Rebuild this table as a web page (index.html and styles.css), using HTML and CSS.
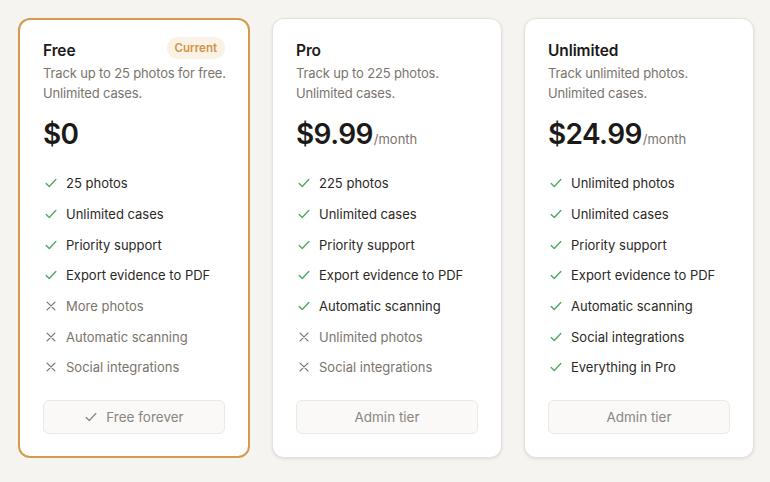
FILE: index.html
```html
<!DOCTYPE html>
<html>
<head>
<meta charset="utf-8">
<link rel="stylesheet" href="styles.css">
</head>
<body>
<div class="plans">
  <div class="card current">
    <div class="head">
      <h2 class="name">Free</h2>
      <span class="badge">Current</span>
    </div>
    <p class="desc"><span>Track up to 25 photos for free.</span> <span>Unlimited cases.</span></p>
    <div class="price"><span class="amount">$0</span></div>
    <ul class="features">
      <li class="yes"><svg viewBox="0 0 16 16"><path d="M2.5 8.5l3.5 3.5 7.5-8"/></svg>25 photos</li>
      <li class="yes"><svg viewBox="0 0 16 16"><path d="M2.5 8.5l3.5 3.5 7.5-8"/></svg>Unlimited cases</li>
      <li class="yes"><svg viewBox="0 0 16 16"><path d="M2.5 8.5l3.5 3.5 7.5-8"/></svg>Priority support</li>
      <li class="yes"><svg viewBox="0 0 16 16"><path d="M2.5 8.5l3.5 3.5 7.5-8"/></svg>Export evidence to PDF</li>
      <li class="no"><svg viewBox="0 0 16 16"><path d="M3.5 3.5l9 9M12.5 3.5l-9 9"/></svg>More photos</li>
      <li class="no"><svg viewBox="0 0 16 16"><path d="M3.5 3.5l9 9M12.5 3.5l-9 9"/></svg>Automatic scanning</li>
      <li class="no"><svg viewBox="0 0 16 16"><path d="M3.5 3.5l9 9M12.5 3.5l-9 9"/></svg>Social integrations</li>
    </ul>
    <div class="btn"><svg viewBox="0 0 16 16"><path d="M2.5 8.5l3.5 3.5 7.5-8"/></svg>Free forever</div>
  </div>
  <div class="card">
    <div class="head">
      <h2 class="name">Pro</h2>
    </div>
    <p class="desc"><span>Track up to 225 photos.</span> <span>Unlimited cases.</span></p>
    <div class="price"><span class="amount">$9.99</span><span class="per">/month</span></div>
    <ul class="features">
      <li class="yes"><svg viewBox="0 0 16 16"><path d="M2.5 8.5l3.5 3.5 7.5-8"/></svg>225 photos</li>
      <li class="yes"><svg viewBox="0 0 16 16"><path d="M2.5 8.5l3.5 3.5 7.5-8"/></svg>Unlimited cases</li>
      <li class="yes"><svg viewBox="0 0 16 16"><path d="M2.5 8.5l3.5 3.5 7.5-8"/></svg>Priority support</li>
      <li class="yes"><svg viewBox="0 0 16 16"><path d="M2.5 8.5l3.5 3.5 7.5-8"/></svg>Export evidence to PDF</li>
      <li class="yes"><svg viewBox="0 0 16 16"><path d="M2.5 8.5l3.5 3.5 7.5-8"/></svg>Automatic scanning</li>
      <li class="no"><svg viewBox="0 0 16 16"><path d="M3.5 3.5l9 9M12.5 3.5l-9 9"/></svg>Unlimited photos</li>
      <li class="no"><svg viewBox="0 0 16 16"><path d="M3.5 3.5l9 9M12.5 3.5l-9 9"/></svg>Social integrations</li>
    </ul>
    <div class="btn">Admin tier</div>
  </div>
  <div class="card">
    <div class="head">
      <h2 class="name">Unlimited</h2>
    </div>
    <p class="desc"><span>Track unlimited photos.</span> <span>Unlimited cases.</span></p>
    <div class="price"><span class="amount">$24.99</span><span class="per">/month</span></div>
    <ul class="features">
      <li class="yes"><svg viewBox="0 0 16 16"><path d="M2.5 8.5l3.5 3.5 7.5-8"/></svg>Unlimited photos</li>
      <li class="yes"><svg viewBox="0 0 16 16"><path d="M2.5 8.5l3.5 3.5 7.5-8"/></svg>Unlimited cases</li>
      <li class="yes"><svg viewBox="0 0 16 16"><path d="M2.5 8.5l3.5 3.5 7.5-8"/></svg>Priority support</li>
      <li class="yes"><svg viewBox="0 0 16 16"><path d="M2.5 8.5l3.5 3.5 7.5-8"/></svg>Export evidence to PDF</li>
      <li class="yes"><svg viewBox="0 0 16 16"><path d="M2.5 8.5l3.5 3.5 7.5-8"/></svg>Automatic scanning</li>
      <li class="yes"><svg viewBox="0 0 16 16"><path d="M2.5 8.5l3.5 3.5 7.5-8"/></svg>Social integrations</li>
      <li class="yes"><svg viewBox="0 0 16 16"><path d="M2.5 8.5l3.5 3.5 7.5-8"/></svg>Everything in Pro</li>
    </ul>
    <div class="btn">Admin tier</div>
  </div>
</div>
</body>
</html>
```
FILE: styles.css
```css
* { box-sizing: border-box; }
html, body { margin: 0; }
body {
  background: #f6f4f0;
  font-family: Inter, "Noto Sans", sans-serif;
  color: #1c1a18;
  width: 770px;
  height: 482px;
  overflow: hidden;
}
.plans {
  display: grid;
  grid-template-columns: 232px 230px 230px;
  gap: 22px;
  padding: 18px 0 0 18px;
  align-items: start;
}
.card {
  background: #fff;
  border: 1px solid #e5e1db;
  border-radius: 12px;
  padding: 20px 23px 23px;
  box-shadow: 0 1px 3px rgba(60, 50, 40, 0.12);
  height: 440px;
  display: flex;
  flex-direction: column;
}
.card.current {
  border: 2px solid #d49a4e;
  padding: 19px 23px 22px 23px;
  box-shadow: none;
}
.head {
  display: flex;
  justify-content: space-between;
  align-items: center;
  height: 22px;
}
.name {
  margin: 0;
  font-size: 15.5px;
  font-weight: 600;
  letter-spacing: -0.1px;
  padding-top: 1px;
}
.badge {
  background: #fbf2e6;
  color: #d09247;
  font-size: 11.5px;
  font-weight: 600;
  padding: 4px 8px;
  border-radius: 12px;
  margin-top: -4px;
}
.desc {
  margin: 2px -6px 0 0;
  font-size: 13px;
  line-height: 20px;
  color: #7a746d;
  letter-spacing: -0.15px;
}
.desc span {
  display: block;
  white-space: nowrap;
}
.price {
  margin-top: 14px;
  display: flex;
  align-items: baseline;
  height: 40px;
}
.amount {
  font-size: 28px;
  font-weight: 600;
  letter-spacing: -0.6px;
}
.per {
  font-size: 13px;
  color: #7a746d;
  margin-left: 1px;
}
.features {
  list-style: none;
  margin: 11px 0 0;
  padding: 0;
}
.features li {
  display: flex;
  align-items: center;
  height: 30.7px;
  font-size: 13px;
  color: #2b2825;
}
.features li svg {
  width: 14px;
  height: 14px;
  margin-right: 8px;
  margin-left: 1px;
  fill: none;
  stroke-width: 1.6;
  stroke-linecap: round;
  stroke-linejoin: round;
}
.features li.yes svg { stroke: #4eaa63; }
.features li.no { color: #7a746d; }
.features li.no svg { stroke: #7a746d; stroke-width: 1.4; }
.btn {
  margin-top: auto;
  height: 34px;
  border: 1px solid #ece8e2;
  background: #faf9f7;
  border-radius: 6px;
  display: flex;
  align-items: center;
  justify-content: center;
  font-size: 13.5px;
  color: #8c8680;
}
.btn svg {
  width: 14px;
  height: 14px;
  margin-right: 8px;
  fill: none;
  stroke: #8c8680;
  stroke-width: 1.5;
  stroke-linecap: round;
  stroke-linejoin: round;
}
```
